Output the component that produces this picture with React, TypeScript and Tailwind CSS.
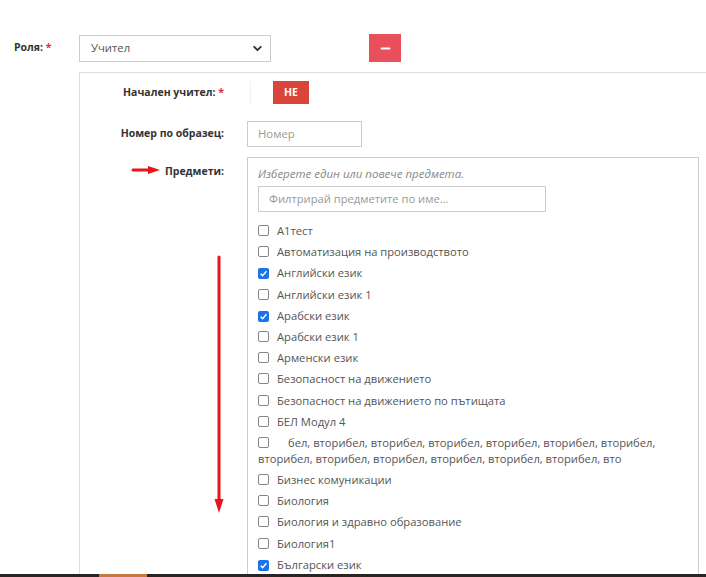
import { Minus, ChevronDown } from "lucide-react";

type Subject = { name: string; checked?: boolean; indent?: boolean };

const subjects: Subject[] = [
  { name: "А1тест" },
  { name: "Автоматизация на производството" },
  { name: "Английски език", checked: true },
  { name: "Английски език 1" },
  { name: "Арабски език", checked: true },
  { name: "Арабски език 1" },
  { name: "Арменски език" },
  { name: "Безопасност на движението" },
  { name: "Безопасност на движението по пътищата" },
  { name: "БЕЛ Модул 4" },
  {
    name: "бел, вторибел, вторибел, вторибел, вторибел, вторибел, вторибел, вторибел, вторибел, вторибел, вторибел, вторибел, вторибел, вто",
    indent: true,
  },
  { name: "Бизнес комуникации" },
  { name: "Биология" },
  { name: "Биология и здравно образование" },
  { name: "Биология1" },
  { name: "Български език", checked: true },
];

const CheckBox = ({ checked }: { checked?: boolean }) =>
  checked ? (
    <span className="inline-flex items-center justify-center w-[11px] h-[11px] rounded-[2px] bg-[#1a73e8] align-[-1px] mr-[8px]">
      <svg viewBox="0 0 10 10" className="w-[9px] h-[9px]">
        <path d="M1.8 5.2 L4 7.4 L8.3 2.6" fill="none" stroke="white" strokeWidth="1.7" />
      </svg>
    </span>
  ) : (
    <span className="inline-block w-[11px] h-[11px] rounded-[2px] border border-[#858585] bg-white align-[-1px] mr-[8px]" />
  );

const App = () => {
  return (
    <div className="h-[577px] flex flex-col overflow-hidden bg-white font-['Open_Sans',sans-serif]">
      <div className="flex-1 min-h-0 overflow-hidden relative">
        {/* Role row */}
        <div className="flex items-center pt-[34px]">
          <div className="w-[79px] pl-[14px] text-[10.5px] font-bold text-[#333]">
            Роля: <span className="text-[#e0303a]">*</span>
          </div>
          <div className="w-[192px] h-[27px] border border-[#ccc] flex items-center justify-between pl-[11px] pr-[6px] text-[11.3px] text-[#555]">
            <span>Учител</span>
            <ChevronDown className="w-[13px] h-[13px] text-[#333]" strokeWidth={3.5} />
          </div>
          <button className="ml-[98px] w-[32px] h-[28px] bg-[#e9505b] flex items-center justify-center">
            <Minus className="w-[13px] h-[13px] text-white" strokeWidth={4} />
          </button>
        </div>

        {/* Teacher panel */}
        <div className="mt-[10px] ml-[79px] border-l border-t border-[#ddd] h-[600px]">
          <div className="flex items-center pt-[8px]">
            <div className="w-[144px] text-right text-[10.5px] font-bold text-[#333]">
              Начален учител: <span className="text-[#e0303a]">*</span>
            </div>
            <div className="ml-[26px] flex h-[23px]">
              <div className="w-[23px] bg-white border-l border-[#f0f0f0]" />
              <div className="w-[36px] bg-[#d9453a] flex items-center justify-center text-[10.5px] font-bold text-white">
                НЕ
              </div>
            </div>
          </div>

          <div className="flex items-center mt-[17px]">
            <div className="w-[144px] text-right text-[10.5px] font-bold text-[#333]">Номер по образец:</div>
            <div className="ml-[23px] w-[115px] h-[26px] border border-[#ccc] flex items-center pl-[10px] text-[11.3px] text-[#999]">
              Номер
            </div>
          </div>

          <div className="flex items-start mt-[10px]">
            <div className="w-[144px] pt-[6px] text-right text-[10.5px] font-bold leading-4 text-[#333]">Предмети:</div>
            <div className="ml-[23px] w-[452px] h-[600px] border border-[#ccc] pl-[10px] pr-[10px] pt-[8px]">
              <div className="text-[11.5px] italic leading-4 text-[#888]">Изберете един или повече предмета.</div>
              <div className="mt-[4px] w-[288px] h-[26px] border border-[#ccc] flex items-center pl-[10px] text-[11.2px] text-[#999]">
                Филтрирай предметите по име...
              </div>
              <div className="mt-[11px] flex flex-col gap-[5.2px]">
                {subjects.map((s) => (
                  <div key={s.name} className="text-[11.2px] leading-4 text-[#555]">
                    <CheckBox checked={s.checked} />
                    <span className={s.indent ? "ml-[11px]" : ""}>{s.name}</span>
                  </div>
                ))}
              </div>
            </div>
          </div>
        </div>

        {/* Annotation arrows */}
        <svg className="absolute left-[130px] top-[164px]" width="34" height="12" viewBox="0 0 34 12">
          <line x1="3" y1="6" x2="20" y2="6" stroke="#e8141a" strokeWidth="3" strokeLinecap="round" />
          <polygon points="18,2 30,6 18,10" fill="#e8141a" />
        </svg>
        <svg className="absolute left-[212px] top-[254px]" width="14" height="262" viewBox="0 0 14 262">
          <line x1="7" y1="3" x2="7" y2="248" stroke="#e8141a" strokeWidth="3" strokeLinecap="round" />
          <polygon points="2.5,245 11.5,245 7,259" fill="#e8141a" />
        </svg>
      </div>

      {/* Bottom bar */}
      <div className="h-[3px] flex bg-[#2a2525]">
        <div className="ml-[99px] w-[48px] bg-[#c8783a]" />
      </div>
    </div>
  );
};

export default App;
